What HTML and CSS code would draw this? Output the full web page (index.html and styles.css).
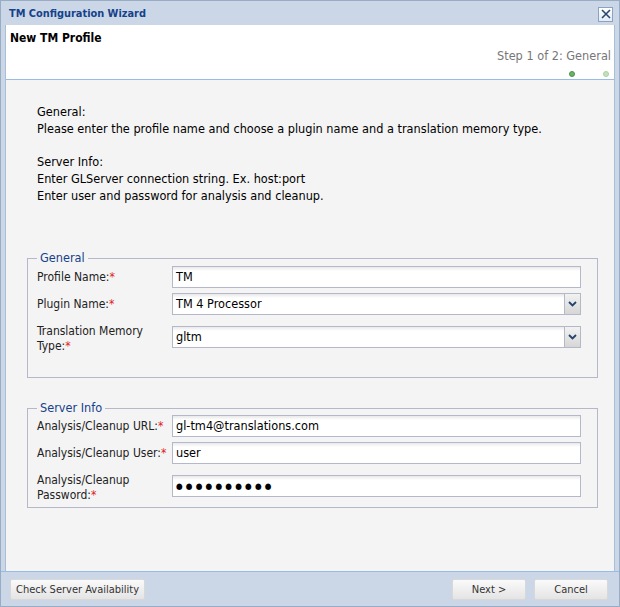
FILE: index.html
```html
<!DOCTYPE html>
<html lang="en">
<head>
    <meta charset="UTF-8">
    <title>TM Configuration Wizard</title>
    <link rel="stylesheet" href="styles.css">
</head>
<body>
    <div class="window">
        <div class="titlebar">
            <span class="title">TM Configuration Wizard</span>
            <span class="close-btn">
                <svg width="10" height="10" viewBox="0 0 10 10"><path d="M1 1 L9 9 M9 1 L1 9" stroke="#2a4670" stroke-width="1.6"/></svg>
            </span>
        </div>
        <div class="wizard">
            <div class="header">
                <div class="header-title">New TM Profile</div>
                <div class="step">Step 1 of 2: General</div>
                <div class="dots">
                    <span class="dot active"></span>
                    <span class="dot"></span>
                </div>
            </div>
            <div class="body">
                <div class="intro">
                    <p>General:<br>Please enter the profile name and choose a plugin name and a translation memory type.</p>
                    <p>Server Info:<br>Enter GLServer connection string. Ex. host:port<br>Enter user and password for analysis and cleanup.</p>
                </div>

                <fieldset class="group group-general">
                    <legend>General</legend>
                    <div class="row">
                        <label>Profile Name:<em>*</em></label>
                        <div class="field">TM</div>
                    </div>
                    <div class="row">
                        <label>Plugin Name:<em>*</em></label>
                        <div class="field combo">TM 4 Processor<span class="trigger"><svg width="9" height="6" viewBox="0 0 9 6"><path d="M1 1 L4.5 4.5 L8 1" fill="none" stroke="#24426e" stroke-width="1.8"/></svg></span></div>
                    </div>
                    <div class="row tall">
                        <label>Translation Memory<br>Type:<em>*</em></label>
                        <div class="field combo">gltm<span class="trigger"><svg width="9" height="6" viewBox="0 0 9 6"><path d="M1 1 L4.5 4.5 L8 1" fill="none" stroke="#24426e" stroke-width="1.8"/></svg></span></div>
                    </div>
                </fieldset>

                <fieldset class="group group-server">
                    <legend>Server Info</legend>
                    <div class="row">
                        <label>Analysis/Cleanup URL:<em>*</em></label>
                        <div class="field">gl-tm4@translations.com</div>
                    </div>
                    <div class="row">
                        <label>Analysis/Cleanup User:<em>*</em></label>
                        <div class="field">user</div>
                    </div>
                    <div class="row tall">
                        <label>Analysis/Cleanup<br>Password:<em>*</em></label>
                        <div class="field password">&#9679;&#9679;&#9679;&#9679;&#9679;&#9679;&#9679;&#9679;&#9679;&#9679;</div>
                    </div>
                </fieldset>
            </div>
        </div>
        <div class="footer">
            <button class="btn">Check Server Availability</button>
            <div class="spacer"></div>
            <button class="btn btn-wide">Next &gt;</button>
            <button class="btn btn-wide">Cancel</button>
        </div>
    </div>
</body>
</html>
```

FILE: styles.css
```css
/* Основные стили */
html, body {
    margin: 0;
    padding: 0;
}
body {
    font-family: "DejaVu Sans Condensed", "DejaVu Sans", sans-serif;
    font-stretch: condensed;
    font-size: 12.6px;
    color: #000;
    background: #fff;
}
.window {
    width: 620px;
    height: 607px;
    box-sizing: border-box;
    background: #cbd7e6;
    border: 1px solid #99acc6;
    display: flex;
    flex-direction: column;
}
.titlebar {
    height: 24px;
    display: flex;
    align-items: center;
    justify-content: space-between;
    padding: 0 6px 0 8px;
}
.title {
    color: #15428b;
    font-weight: bold;
    font-size: 10.9px;
}
.close-btn {
    width: 13px;
    height: 13px;
    border: 1px solid #8aa3c4;
    background: linear-gradient(#ffffff, #e3ebf5);
    display: flex;
    align-items: center;
    justify-content: center;
    margin-top: 2px;
}
.wizard {
    flex: 1;
    margin: 0 4px;
    display: flex;
    flex-direction: column;
    border-left: 1px solid #a9bfd8;
    border-right: 1px solid #a9bfd8;
}
.header {
    height: 55px;
    background: #fff;
    border-bottom: 1px solid #99bbe8;
    position: relative;
    padding: 5px 3px 0 4px;
    box-sizing: border-box;
}
.header-title {
    font-weight: bold;
    font-size: 12px;
    line-height: 16px;
}
.step {
    text-align: right;
    color: #777;
    line-height: 16px;
    margin-top: 2px;
}
.dots {
    position: absolute;
    right: 5px;
    bottom: 2px;
    display: flex;
    gap: 28px;
}
.dot {
    width: 4px;
    height: 4px;
    border-radius: 50%;
    background: #c3e0bd;
    border: 1px solid #a9d0a2;
}
.dot.active {
    background: #6bb36b;
    border-color: #4c924c;
}
.body {
    flex: 1;
    background: #f4f4f4;
    padding: 23px 16px 0 21px;
}
.intro {
    padding-left: 10px;
    line-height: 17px;
    margin-bottom: 47px;
}
.intro p {
    margin: 0 0 16px 0;
}
.group {
    border: 1px solid #b5b8c8;
    margin: 0;
    padding: 1px 16px 0 9px;
}
.group legend {
    color: #15428b;
    padding: 0 3px;
    margin-left: 0;
    line-height: 14px;
}
.group-general {
    padding-bottom: 24px;
}
.group-server {
    margin-top: 23px;
    padding-top: 0;
    padding-bottom: 5px;
}
.row {
    display: flex;
    align-items: flex-start;
    margin-bottom: 5px;
}
.row:last-child {
    margin-bottom: 0;
}
.row label {
    width: 135px;
    flex: none;
    padding-top: 4px;
    line-height: 14px;
    font-size: 12px;
    color: #222;
    white-space: nowrap;
}
.row label em {
    color: #e02020;
    font-style: normal;
}
.row.tall label {
    line-height: 14.5px;
    padding-top: 4px;
}
.row.tall .field {
    margin-top: 6px;
}
.field {
    flex: 1;
    height: 22px;
    box-sizing: border-box;
    border: 1px solid #b5b8c8;
    background: linear-gradient(#e9e9e9, #ffffff 4px, #ffffff);
    padding: 0 3px;
    line-height: 20px;
    position: relative;
}
.field.password {
    font-size: 8.5px;
    letter-spacing: 3.2px;
}
.trigger {
    position: absolute;
    top: -1px;
    right: -1px;
    width: 17px;
    height: 22px;
    box-sizing: border-box;
    border: 1px solid #b5b8c8;
    background: linear-gradient(#f2f2f2, #d6d6d6);
    display: flex;
    align-items: center;
    justify-content: center;
}
.footer {
    height: 34px;
    display: flex;
    align-items: center;
    padding: 0 11px 0 9px;
    border-top: 1px solid #99bbe8;
}
.spacer {
    flex: 1;
}
.btn {
    font-family: inherit;
    font-stretch: condensed;
    font-size: 11px;
    color: #333;
    height: 21px;
    padding: 0 5px;
    border: 1px solid #d8d8d8;
    border-radius: 2px;
    background: linear-gradient(#fafafa, #e4e4e4);
}
.btn-wide {
    width: 74px;
    margin-left: 8px;
}
```
